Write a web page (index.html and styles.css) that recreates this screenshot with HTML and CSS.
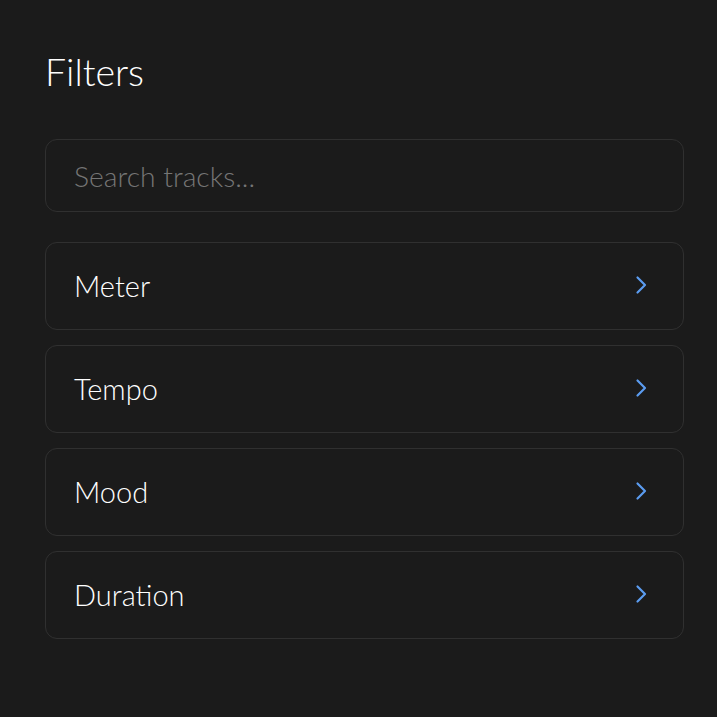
FILE: index.html
```html
<!DOCTYPE html>
<html lang="en">
<head>
<meta charset="utf-8">
<title>Filters</title>
<link rel="stylesheet" href="styles.css">
</head>
<body>
<div class="panel">
  <h1 class="title">Filters</h1>
  <input class="search" type="text" placeholder="Search tracks...">
  <div class="list">
    <div class="row"><span class="label">Meter</span><svg class="chev" viewBox="0 0 14 20" width="14" height="20"><path d="M2.5 2.5l7.5 7.5-7.5 7.5" fill="none" stroke="#5b9cf0" stroke-width="2.2" stroke-linecap="round" stroke-linejoin="round"/></svg></div>
    <div class="row"><span class="label">Tempo</span><svg class="chev" viewBox="0 0 14 20" width="14" height="20"><path d="M2.5 2.5l7.5 7.5-7.5 7.5" fill="none" stroke="#5b9cf0" stroke-width="2.2" stroke-linecap="round" stroke-linejoin="round"/></svg></div>
    <div class="row"><span class="label">Mood</span><svg class="chev" viewBox="0 0 14 20" width="14" height="20"><path d="M2.5 2.5l7.5 7.5-7.5 7.5" fill="none" stroke="#5b9cf0" stroke-width="2.2" stroke-linecap="round" stroke-linejoin="round"/></svg></div>
    <div class="row"><span class="label">Duration</span><svg class="chev" viewBox="0 0 14 20" width="14" height="20"><path d="M2.5 2.5l7.5 7.5-7.5 7.5" fill="none" stroke="#5b9cf0" stroke-width="2.2" stroke-linecap="round" stroke-linejoin="round"/></svg></div>
  </div>
</div>
</body>
</html>
```
FILE: styles.css
```css
html, body {
  margin: 0;
  padding: 0;
  background: #1b1b1b;
  height: 100%;
}
body {
  font-family: Lato, "Noto Sans", sans-serif;
  color: #ffffff;
}
.panel {
  width: 639px;
  padding: 48px 0 0 45px;
  display: flex;
  flex-direction: column;
}
.title {
  margin: 0;
  font-size: 37.5px;
  font-weight: 300;
  line-height: 48px;
  color: #ffffff;
}
.search {
  margin-top: 43px;
  height: 73px;
  box-sizing: border-box;
  border: 1px solid #303030;
  border-radius: 12px;
  background: #1b1b1b;
  padding: 0 28px;
  font-family: Lato, "Noto Sans", sans-serif;
  font-size: 28.3px;
  font-weight: 300;
  color: #ffffff;
  outline: none;
}
.search::placeholder {
  color: #757575;
}
.list {
  margin-top: 30px;
  display: flex;
  flex-direction: column;
  gap: 15px;
}
.row {
  height: 88px;
  box-sizing: border-box;
  border: 1px solid #303030;
  border-radius: 12px;
  display: flex;
  align-items: center;
  justify-content: space-between;
  padding: 0 34px 2px 28px;
}
.label {
  font-size: 29px;
  font-weight: 300;
  color: #ffffff;
}
.chev {
  display: block;
}
```
